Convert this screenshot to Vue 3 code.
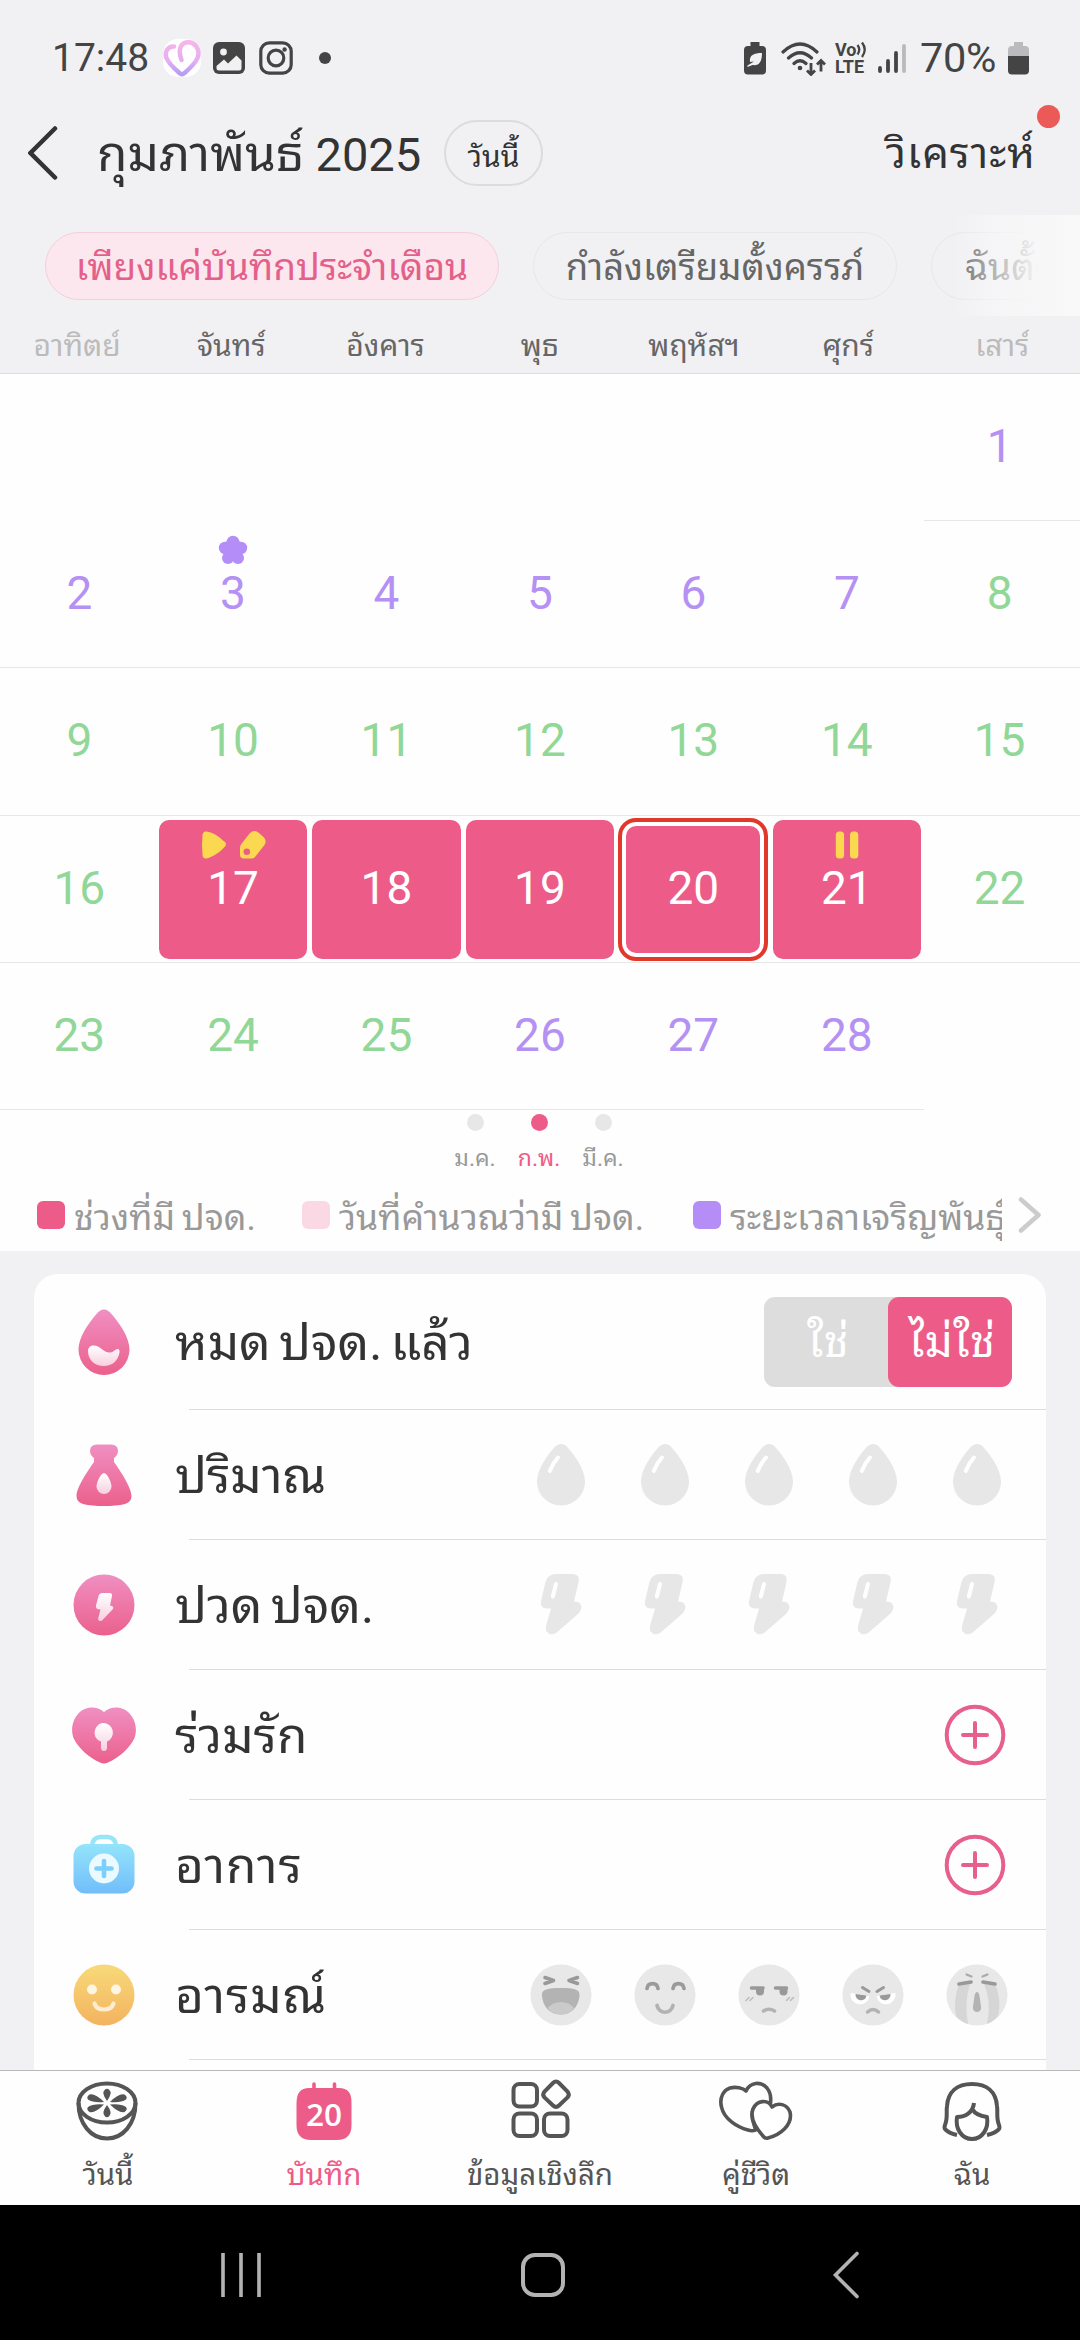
<script setup>
const weekdays = [
  { name: 'อาทิตย์', dim: true }, { name: 'จันทร์' }, { name: 'อังคาร' }, { name: 'พุธ' },
  { name: 'พฤหัสฯ' }, { name: 'ศุกร์' }, { name: 'เสาร์', dim: true },
]

const blanks = Array.from({ length: 6 }, () => ({ type: 'blank' }))
const days = Array.from({ length: 28 }, (_, i) => {
  const n = i + 1
  let type = 'safe'
  if (n <= 7 || n >= 26) type = 'fertile'
  if (n >= 17 && n <= 21) type = 'period'
  return { n, type, selected: n === 20 }
})
const cells = [...blanks, ...days, { type: 'blank' }]

const months = [{ name: 'ม.ค.' }, { name: 'ก.พ.', on: true }, { name: 'มี.ค.' }]
const five = [1, 2, 3, 4, 5]
</script>

<template>
  <div class="screen">
    <svg class="defs" width="0" height="0">
      <defs>
        <linearGradient id="pink" x1="0" y1="0" x2="0" y2="1"><stop offset="0" stop-color="#f08fc2" /><stop offset="1" stop-color="#eb608c" /></linearGradient>
        <linearGradient id="milk" x1="0" y1="0" x2="0" y2="1"><stop offset="0" stop-color="#fff" /><stop offset="1" stop-color="#f7cfdf" /></linearGradient>
        <linearGradient id="sky" x1="0" y1="0" x2="0" y2="1"><stop offset="0" stop-color="#94e4fb" /><stop offset="1" stop-color="#71bdfa" /></linearGradient>
        <linearGradient id="sun" x1="0" y1="0" x2="0" y2="1"><stop offset="0" stop-color="#f8da79" /><stop offset="1" stop-color="#f3b35f" /></linearGradient>
        <linearGradient id="love" x1="0" y1="0" x2="0" y2="1"><stop offset="0" stop-color="#f7b5e8" /><stop offset=".6" stop-color="#e3aef3" /><stop offset="1" stop-color="#b49cf3" /></linearGradient>
      </defs>
    </svg>

    <header class="top">
      <div class="status">
        <span class="clock">17:48</span>
        <svg class="s-love" width="38" height="40" viewBox="0 0 38 40"><rect x="0" y="1" width="38" height="38" rx="15" fill="#fff" /><path d="M11 8.500C4 8 1.500 15 3.500 20C6 26 13 32 16.500 35Q19 37.500 21.500 35C26 31 32 26 34.500 20C38 11 31 2.500 23 4.500C17 6 15 13 18.500 22" fill="none" stroke="url(#love)" stroke-width="4.500" stroke-linecap="round" /></svg>
        <svg class="s-img" width="32" height="32" viewBox="0 0 32 32"><rect width="32" height="32" rx="6" fill="#444" /><circle cx="10.500" cy="10" r="3.400" fill="#f1f1f4" /><path d="M3.500 24L11 17.500L15 21.500L23.500 13.500L28.500 18.500V26Q28.500 28.500 26 28.500H6Q3.500 28.500 3.500 26Z" fill="#f1f1f4" /></svg>
        <svg class="s-ig" width="34" height="34" viewBox="0 0 34 34" fill="none" stroke="#444"><rect x="1.800" y="1.800" width="30.400" height="30.400" rx="8.500" stroke-width="3.200" /><circle cx="17" cy="17" r="7.800" stroke-width="3.200" /><circle cx="25.600" cy="8.500" r="2.200" fill="#444" stroke="none" /></svg>
        <span class="s-dot"></span>
        <span class="grow"></span>
        <svg class="s-eco" width="22" height="33" viewBox="0 0 22 33"><path d="M6.500 0H15.500V4H18Q22 4 22 8V28.500Q22 32.500 18 32.500H4Q0 32.500 0 28.500V8Q0 4 4 4H6.500Z" fill="#444" /><path d="M18 11C18 20 15 24 8.500 23L3.500 25V23.500L10 19.500L6 20C5 13 10 11 18 11Z" fill="#f1f1f4" /></svg>
        <svg class="s-wifi" width="46" height="35" viewBox="0 0 46 35" fill="none" stroke="#444" stroke-width="3.200" stroke-linecap="round"><path d="M2 11Q19 -5 36 11M7.500 17Q19 6.500 30.500 17M13 22.500Q19 17 25 22.500" /><circle cx="19" cy="27" r="2.300" fill="#444" stroke="none" /><path d="M30 22V33M26 29.500L30 33.500L34 29.500M40 30.500V20M36 23.500L40 19.500L44 23.500" stroke-width="2.800" stroke-linecap="butt" /></svg>
        <span class="volte"><b>Vo</b><b>LTE</b><svg width="11" height="17" viewBox="0 0 11 17" fill="none" stroke="#444" stroke-width="2.300"><path d="M1.500 4Q5 8.500 1.500 13.500M6 1.500Q11.500 8.500 6 16" /></svg></span>
        <svg class="s-sig" width="28" height="31" viewBox="0 0 28 31" stroke="#444" stroke-width="3.800" stroke-linecap="round"><path d="M2 25V28M10 18V28M18 10V28" /><path d="M26 3V28" stroke="#b9b9bb" /></svg>
        <span class="pct">70%</span>
        <svg class="s-bat" width="21" height="33" viewBox="0 0 21 33"><path d="M6 0H15V4H17Q21 4 21 8V14H0V8Q0 4 4 4H6Z" fill="#bbbbbd" /><path d="M0 14H21V28.500Q21 32.500 17 32.500H4Q0 32.500 0 28.500Z" fill="#444" /></svg>
      </div>

      <div class="bar">
        <svg class="back" width="30" height="54" viewBox="0 0 30 54"><path d="M27 2.500L2.500 27L27 51.500" fill="none" stroke="#333" stroke-width="4.500" stroke-linecap="round" /></svg>
        <h1><span class="mon">กุมภาพันธ์</span> 2025</h1>
        <button class="today">วันนี้</button>
        <span class="grow"></span>
        <span class="analyze">วิเคราะห์<i class="badge"></i></span>
      </div>

      <div class="chips">
        <button class="chip on">เพียงแค่บันทึกประจำเดือน</button>
        <button class="chip prep">กำลังเตรียมตั้งครรภ์</button>
        <button class="chip preg">ฉันตั้งครรภ์</button>
        <span class="fade"></span>
      </div>

      <div class="week"><span v-for="d in weekdays" :key="d.name" :class="{ dim: d.dim }">{{ d.name }}</span></div>
    </header>

    <section class="calendar">
      <div class="grid">
        <div v-for="(c, i) in cells" :key="i" class="cell" :class="[c.type, { selected: c.selected }]">
          <div v-if="c.n" class="tile">
            <span class="num">{{ c.n }}</span>
            <svg v-if="c.n === 3" class="mark" width="30" height="30" viewBox="0 0 30 30" fill="#b48df7"><path d="M15 4L24.500 11L21 24H9L5.500 11Z" stroke="#b48df7" stroke-width="4" stroke-linejoin="round" /><circle cx="15" cy="7" r="6.300" /><circle cx="23" cy="13" r="6.200" /><circle cx="7" cy="13" r="6.200" /><circle cx="10" cy="23" r="6" /><circle cx="20" cy="23" r="6" /></svg>
            <svg v-if="c.n === 17" class="mark" width="66" height="30" viewBox="0 0 66 30"><path d="M6.500 1.500C13 2 19 7 25 12Q27 14 25 16.500C20 22 14 26.500 6.500 28.500Q3 29 2.500 25Q1.500 15 2.500 5Q3 1 6.500 1.500Z" fill="#fad850" /><path d="M50 3Q54.500 -1 59 3L64 7.500Q67 11 64.500 15L55 27Q53.500 28.500 51.500 28.500H44Q40 28.500 40 24.500V18Q40 16 41 14.500ZM46.800 18.500A3.300 3.300 0 1 0 46.800 25.100A3.300 3.300 0 1 0 46.800 18.500Z" fill="#fad850" fill-rule="evenodd" /></svg>
            <svg v-if="c.n === 21" class="mark" width="30" height="30" viewBox="0 0 30 30" fill="#fad850"><rect x="3.800" y="1.500" width="8.300" height="27" rx="3.500" /><rect x="18" y="1.500" width="8.300" height="27" rx="3.500" /></svg>
          </div>
        </div>
      </div>

      <div class="months">
        <div v-for="m in months" :key="m.name" class="month" :class="{ on: m.on }"><i></i><span>{{ m.name }}</span></div>
      </div>

      <div class="legend">
        <div class="leg-list">
          <span class="leg a"><i></i><em>ช่วงที่มี ปจด.</em></span>
          <span class="leg b"><i></i><em>วันที่คำนวณว่ามี ปจด.</em></span>
          <span class="leg c"><i></i><em>ระยะเวลาเจริญพันธุ์</em></span>
        </div>
        <svg width="24" height="38" viewBox="0 0 24 38"><path d="M3 3.500L20.500 19L3 34.500" fill="none" stroke="#ccc" stroke-width="4.500" stroke-linecap="round" stroke-linejoin="round" /></svg>
      </div>
    </section>

    <main class="sheet">
      <div class="card">
        <div class="row first">
          <svg class="ico" viewBox="0 0 66 66"><path d="M33 .5C36 .5 38 2 40.500 5C48 13.500 58.500 28 58.500 40.500A25.500 25.500 0 0 1 7.500 40.500C7.500 28 18 13.500 25.500 5C28 2 30 .5 33 .5Z" fill="url(#pink)" /><path d="M17 42C17 37 22 35 27 37.500C33 41 36 46 43 42C47 38.500 49 40 48.500 43.500C47 52 41 57 33 57C24 57 17 51 17 42Z" fill="url(#milk)" /></svg>
          <div class="body"><span class="label">หมด ปจด. แล้ว</span><div class="toggle"><span class="yes">ใช่</span><span class="no">ไม่ใช่</span></div></div>
        </div>
        <div class="row">
          <svg class="ico" viewBox="0 0 66 66"><path d="M26 2.500H40Q47 2.500 47 9Q47 13 43 16V20C48 27 60.500 45 60.500 54Q60.500 60 54 62Q45 64 33 64Q21 64 12 62Q5.500 60 5.500 54C5.500 45 18 27 23 20V16Q19 13 19 9Q19 2.500 26 2.500Z" fill="url(#pink)" /><path d="M33 31C36 31 40.500 40 40.500 44.500A7.500 7.500 0 0 1 25.500 44.500C25.500 40 30 31 33 31Z" fill="url(#milk)" /></svg>
          <div class="body"><span class="label">ปริมาณ</span>
            <div class="picks"><svg v-for="n in five" :key="n" viewBox="0 0 66 66"><path d="M33 2C35.500 2 37.500 3 40 6C47 13.500 57 28 57 39.500A24 24 0 0 1 9 39.500C9 28 19 13.500 26 6C28.500 3 30.500 2 33 2Z" fill="#e7e7e7" /><path d="M30 15.500Q25 21 21.800 29" fill="none" stroke="#fff" stroke-width="4" stroke-linecap="round" /></svg></div>
          </div>
        </div>
        <div class="row">
          <svg class="ico" viewBox="0 0 66 66"><circle cx="33" cy="33" r="30.500" fill="url(#pink)" /><path d="M31.500 21H38.500Q41.500 21 41 24L39 33.500Q43.500 34 42 37L31 48.500Q27.500 50 27 47L29.500 37.500Q24 37.500 25 33.500L27.500 24Q28.500 21 31.500 21Z" fill="url(#milk)" /></svg>
          <div class="body"><span class="label">ปวด ปจด.</span>
            <div class="picks"><svg v-for="n in five" :key="n" viewBox="0 0 66 66"><path d="M28 2H44Q52 2 50.500 10L46 29.500Q53 29 53.500 35.500Q53 39 50 42L28 61Q22.500 64 18.500 59.500Q17.500 57 18 54L23 36.500H18Q12 35.500 13 29L17.500 10Q20 2 28 2Z" fill="#e7e7e7" /><path d="M28 12L24.800 24.500" stroke="#fff" stroke-width="4" stroke-linecap="round" /></svg></div>
          </div>
        </div>
        <div class="row">
          <svg class="ico" viewBox="0 0 66 66"><path d="M33 10C41 3 53 4.500 59 12C64.500 18 66.500 28 63.500 36C59 46 48 55.500 37 60.500Q33 62.500 29 60.500C18 55.500 7 46 2.500 36C-.5 28 1.500 18 7 12C13 4.500 25 3 33 10Z" fill="url(#pink)" /><path d="M23.500 30.800A9.200 9.600 0 1 1 36 39.600V46.500Q35.500 49 33 49Q30.500 49 30 46.500V39.600A9.300 9.600 0 0 1 23.500 30.800Z" fill="url(#milk)" /></svg>
          <div class="body"><span class="label">ร่วมรัก</span><svg class="add" viewBox="0 0 62 62"><circle cx="31" cy="31" r="28.300" /><path d="M31 19V43M19 31H43" /></svg></div>
        </div>
        <div class="row">
          <svg class="ico" viewBox="0 0 66 66"><path d="M21 13.500Q22 5.500 29 5H37Q44 5.500 45 13.500" fill="none" stroke="#96e5f9" stroke-width="4.500" /><rect x="2.500" y="12" width="61" height="49.500" rx="12" fill="url(#sky)" /><circle cx="33" cy="36.500" r="15" fill="#eafaff" /><path d="M33 29V44M25.500 36.500H40.500" stroke="#7bcffa" stroke-width="4.600" stroke-linecap="round" /></svg>
          <div class="body"><span class="label wide">อาการ</span><svg class="add" viewBox="0 0 62 62"><circle cx="31" cy="31" r="28.300" /><path d="M31 19V43M19 31H43" /></svg></div>
        </div>
        <div class="row">
          <svg class="ico" viewBox="0 0 66 66"><circle cx="33" cy="33" r="30.500" fill="url(#sun)" /><circle cx="21" cy="27.500" r="5" fill="#fef5e2" /><circle cx="45" cy="27.500" r="5" fill="#fef5e2" /><path d="M23.500 41.500C26 49.500 40 49.500 42.500 41.500" fill="none" stroke="#fdecd0" stroke-width="4.200" stroke-linecap="round" /></svg>
          <div class="body"><span class="label wide">อารมณ์</span>
            <div class="picks moods">
              <svg viewBox="0 0 66 66"><circle cx="33" cy="33" r="30.500" fill="#e8e8e8" /><path d="M17 15.500L25.500 18.500L17 21.500M49.500 15.500L41 18.500L49.500 21.500" fill="none" stroke="#999" stroke-width="3.600" stroke-linecap="round" stroke-linejoin="round" /><path d="M14 34C13 27 20 26 33 26C46 26 52.500 27 51.500 34C50.500 45 43 52.500 33 52.500C22 52.500 15 45 14 34Z" fill="#b3b3b3" /><path d="M19.500 46Q25 40 33 40Q41 40 46 46Q41 52.500 33 52.500Q24 52.500 19.500 46Z" fill="#cacaca" /></svg>
              <svg viewBox="0 0 66 66" fill="none" stroke-width="3.700" stroke-linecap="round"><circle cx="33" cy="33" r="30.500" fill="#e8e8e8" /><path d="M15 26.500C16 20 25 20 26 26.500M41 26.500C42 20 51 20 52 26.500" stroke="#9a9a9a" /><path d="M25 43.500C27 52.500 39 52.500 41 43.500" stroke="#b2b2b2" /></svg>
              <svg viewBox="0 0 66 66" fill="none" stroke-linecap="round"><circle cx="33" cy="33" r="30.500" fill="#e8e8e8" /><path d="M15.500 26H27M39.500 26H50.500" stroke="#999" stroke-width="3.600" /><path d="M20 26H28V29.500A4 4 0 0 1 20 29.500ZM43.500 26H51.500V29.500A4 4 0 0 1 43.500 29.500Z" fill="#999" /><path d="M10 38.500L13 35.500M14 38.500L17 35.500M50.500 38.500L53.500 35.500M54.500 38.500L57.500 35.500" stroke="#bbb" stroke-width="1.500" /><path d="M27.500 49Q33 45.500 38.500 49" stroke="#b3b3b3" stroke-width="3.500" /></svg>
              <svg viewBox="0 0 66 66" fill="none" stroke-linecap="round"><circle cx="33" cy="33" r="30.500" fill="#e8e8e8" /><path d="M10.500 31L29.500 34A9.500 9.700 0 1 1 10.500 31ZM55.500 31L36.500 34A9.500 9.700 0 1 0 55.500 31Z" fill="#fff" /><path d="M15.500 32L26.500 33.500A5.500 5.500 0 0 1 15.500 32ZM50.500 32L39.500 33.500A5.500 5.500 0 0 0 50.500 32Z" fill="#999" /><path d="M22.500 25.500L29 29.500M43.500 25.500L37 29.500" stroke="#999" stroke-width="3" /><path d="M27.500 50Q33 45 38.500 50" stroke="#b3b3b3" stroke-width="3.500" /></svg>
              <svg viewBox="0 0 66 66" fill="none" stroke-linecap="round"><circle cx="33" cy="33" r="30.500" fill="#e8e8e8" /><path d="M15 22H26Q20 40 24 62Q17 60 12 54Q9 38 15 22ZM51 22H40Q48 40 43 62Q49 60 54 54Q58 38 51 22Z" fill="#d6d6d6" /><path d="M15 22L27 20M51 22L39 20" stroke="#999" stroke-width="3.700" /><path d="M22.500 12.500L27.500 14.500M43.500 12.500L38.500 14.500" stroke="#aaa" stroke-width="2.200" /><path d="M33 30Q34.800 30 35.500 34L37.200 46A4.300 5 0 0 1 28.800 46L30.500 34Q31.200 30 33 30Z" fill="#b3b3b3" /></svg>
            </div>
          </div>
        </div>
      </div>
    </main>

    <nav class="tabs">
      <div class="tab">
        <svg width="74" height="64" viewBox="0 0 74 64" fill="none" stroke="#555" stroke-width="4"><ellipse cx="36" cy="24" rx="28.500" ry="19.500" /><path d="M7.500 24C7.500 45 20 59.500 36 59.500S64.500 45 64.500 24" /><g fill="#555" stroke="none"><path d="M36 22Q30 14 34 10.500Q36 9 38 10.500Q42 14 36 22ZM36 26Q30 34 34 37.500Q36 39 38 37.500Q42 34 36 26Z" /><path d="M33 23Q22 24 17 20.500Q15 18 18.500 15.500Q24 14 33 23ZM39 23Q50 24 55 20.500Q57 18 53.500 15.500Q48 14 39 23ZM33 25.500Q22 24.500 17 28Q15 30.500 18.500 33Q24 34.500 33 25.500ZM39 25.500Q50 24.500 55 28Q57 30.500 53.500 33Q48 34.500 39 25.500Z" /></g></svg>
        <span>วันนี้</span>
      </div>
      <div class="tab on">
        <svg width="74" height="64" viewBox="0 0 74 64"><path d="M27 5V12M47.500 5V12" stroke="#ed5c88" stroke-width="3.600" stroke-linecap="round" /><path d="M22 9H52Q65 9 64.500 24V46Q64.500 61 50 61H24Q9.500 61 9.500 46V24Q9.500 9 22 9Z" fill="#ed5c88" /><text x="37" y="47" text-anchor="middle" fill="#fff" font-size="31.500" font-weight="600" font-family="Open Sans, sans-serif">20</text></svg>
        <span>บันทึก</span>
      </div>
      <div class="tab">
        <svg width="74" height="64" viewBox="0 0 74 64" fill="none" stroke="#555" stroke-width="4"><rect x="10.500" y="5" width="23.500" height="22.500" rx="6" /><rect x="10.500" y="34.500" width="23.500" height="22.500" rx="6" /><rect x="41" y="34.500" width="23.500" height="22.500" rx="6" /><path d="M50 4Q53 1 56 4L64.500 12.500Q67 15.500 64.500 18.500L56 26.500Q53 29.500 50 26.500L41.500 18.500Q39 15.500 41.500 12.500Z" /></svg>
        <span>ข้อมูลเชิงลึก</span>
      </div>
      <div class="tab">
        <svg width="78" height="64" viewBox="0 0 78 64" fill="none" stroke="#555" stroke-width="3.600" stroke-linejoin="round"><path d="M29 12C33 3 44 2 50 9C54 14 54.500 20 53 27C46 21 35 26 35 36C35 42 38 47 38.500 51C36 52 34 52 31 51C20 48 7 40 4.500 28C2 18 7 11 13 9C19 7.500 26 9 29 12Z" /><path d="M55 28C61 23 70 25 73 33C76 46 63 56 51 59Q48 60 46 57C38 48 33 38 36 30C40 21 51 20 55 28Z" fill="#fff" /></svg>
        <span>คู่ชีวิต</span>
      </div>
      <div class="tab">
        <svg width="74" height="64" viewBox="0 0 74 64" fill="none" stroke="#555" stroke-width="4" stroke-linejoin="round"><path d="M22 56Q13 54 10 50Q9 49 10 46C13 39 11 33 12 27C13 13 22 5 37 5S61 13 62 27C63 33 61 39 64 46Q65 49 64 50Q61 54 52 56" /><path d="M39 24C38 33 31 38 22 38C20 50 27 60 37 60S54 50 52 38C46 37 40 35 38 31" /></svg>
        <span>ฉัน</span>
      </div>
    </nav>

    <footer class="sysnav">
      <svg width="44" height="46" viewBox="0 0 44 46" stroke="#b3b3b3" stroke-width="3.600"><path d="M4 1V45M22 1V45M40 1V45" /></svg>
      <svg class="home" width="46" height="46" viewBox="0 0 46 46"><rect x="3" y="3" width="40" height="40" rx="12" fill="none" stroke="#b3b3b3" stroke-width="4" /></svg>
      <svg width="30" height="48" viewBox="0 0 30 48"><path d="M26 2.500L4.500 24L26 45.500" fill="none" stroke="#b3b3b3" stroke-width="3.600" stroke-linecap="round" /></svg>
    </footer>
  </div>
</template>

<style>
body { margin: 0; background: #f1f1f4; }
</style>

<style scoped>
* { box-sizing: border-box; }
.screen { width: 1080px; height: 2340px; overflow: hidden; display: flex; flex-direction: column; background: #f1f1f4; font-family: Roboto, "Noto Sans Thai Looped", "Noto Looped Thai", "Noto Sans Thai", "Noto Sans", sans-serif; color: #333; white-space: nowrap; }
.defs { position: absolute; }
button { font: inherit; background: none; padding: 0; display: flex; align-items: center; justify-content: center; flex: none; }
svg { flex: none; display: block; }
.grow { flex: 1; }
.top { height: 374px; flex: none; border-bottom: 1px solid #ddd; }

.status { height: 116px; padding: 0 51px 0 52px; display: flex; align-items: center; color: #444; }
.clock, .pct { font-size: 39px; line-height: 46px; }
.clock { width: 98px; }
.s-love { margin-left: 13px; }
.s-img { margin-left: 12px; }
.s-ig { margin-left: 14px; }
.s-dot { width: 12px; height: 12px; border-radius: 50%; background: #444; margin-left: 26px; }
.s-wifi { margin-left: 15px; }
.volte { position: relative; width: 32px; margin-left: 8px; display: flex; flex-direction: column; font-size: 18px; line-height: 17px; }
.volte b { font-weight: 700; }
.volte svg { position: absolute; right: 0; top: 0; }
.s-sig { margin-left: 11px; }
.status .pct { width: 82px; margin: 0 6px 0 14px; font-size: 41.500px; letter-spacing: -.3px; }

.bar { height: 74px; display: flex; align-items: center; padding: 0 46px 0 28px; }
h1 { margin: 3px 0 0 39px; width: 323px; font-size: 47px; line-height: 70px; font-weight: 400; }
.mon { font-size: 49.500px; }
.today { width: 99px; height: 66px; margin-left: 24px; border: 2px solid #dcdcde; border-radius: 33px; font-size: 30px; color: #333; }
.analyze { position: relative; font-size: 42px; letter-spacing: 1px; line-height: 60px; margin: 2px -2px 0 0; }
.badge { position: absolute; width: 23px; height: 23px; border-radius: 50%; background: #eb5a56; right: -24px; top: -19px; }

.chips { position: relative; height: 126px; padding: 42px 0 0 45px; display: flex; gap: 34px; overflow: hidden; font-size: 37px; }
.chip { height: 68px; border: 1px solid #e7e7ea; border-radius: 34px; color: #666; padding-bottom: 5px; }
.chip.on { width: 454px; background: #fce7ee; border-color: #f5cfdb; color: #e4608a; }
.prep { width: 364px; font-size: 36.500px; }
.preg { width: 268px; justify-content: flex-start; padding-left: 33px; }
.fade { position: absolute; right: 0; top: 25px; width: 136px; height: 101px; background: linear-gradient(90deg, rgba(249,249,250,0) 5%, rgba(249,249,250,.55) 38%, #f7f7f8 70%, #f9f9f9); }

.week { height: 57px; display: grid; grid-template-columns: repeat(7, 154.2px); padding-top: 8px; font-size: 30px; line-height: 44px; text-align: center; color: #666; }
.week .dim { color: #bbb; }

.calendar { height: 877px; flex: none; background: #fefefe; }
.grid { display: grid; grid-template-columns: 156.300px repeat(5, 153.460px) 156.400px; grid-auto-rows: 147.200px; }
.cell { border-bottom: 1.500px solid #e7e7e7; padding: 4px 2.700px 3px; }
.cell:nth-child(7n+1) { padding-left: 5px; }
.cell:nth-child(7n) { padding-right: 7px; }
.cell.blank { border-bottom-color: transparent; }
.tile { position: relative; height: 139px; display: flex; align-items: center; justify-content: center; border-radius: 10px; font-size: 46px; }
.num { margin-top: -3px; }
.fertile { color: #b491f3; }
.safe { color: #91d797; }
.period { color: #fff; }
.period .tile { background: #ed5c88; }
.selected .tile { height: 143px; margin: -2px -1px; border: 4.500px solid #e0382b; border-radius: 18px; background-clip: padding-box; box-shadow: inset 0 0 0 4px #fff; }
.mark { position: absolute; top: 10px; left: 50%; transform: translateX(-50%); }

.months { height: 72px; padding-left: 443px; display: flex; }
.month { width: 64px; display: flex; flex-direction: column; align-items: center; padding-top: 4px; font-size: 23px; color: #999; }
.month i { width: 17px; height: 17px; border-radius: 50%; background: #e7e7e7; }
.month span { line-height: 34px; margin-top: 11px; }
.month.on { color: #ed5c88; }
.month.on i { background: #ed5c88; }

.legend { display: flex; align-items: center; padding-left: 37px; height: 66px; }
.leg-list { display: flex; width: 965px; height: 66px; overflow: hidden; font-size: 35.500px; word-spacing: -2px; color: #999; margin-right: 16px; }
.leg { display: flex; align-items: center; flex: none; }
.leg i { width: 28px; height: 28px; border-radius: 6px; margin-right: 9px; }
.leg em { font-style: normal; margin-top: -2px; }
.a { width: 265px; } .a i { background: #ed5c88; }
.b { width: 391px; } .b i { background: #fad9e4; }
.c i { background: #b48df7; }

.sheet { height: 819px; flex: none; overflow: hidden; padding: 23px 34px 0; }
.card { background: #fefefe; border-radius: 24px 24px 0 0; height: 800px; }
.row { height: 130px; display: flex; align-items: center; padding-left: 37px; }
.row.first { height: 136px; }
.ico { width: 66px; height: 66px; }
.body { height: 100%; flex: 1; margin-left: 52px; padding-right: 36px; border-style: solid; border-color: #ddd; border-width: 0 0 1px; display: flex; align-items: center; justify-content: space-between; }
.label { font-size: 49.500px; word-spacing: -4px; line-height: 80px; margin: 3px 0 0 -14px; }
.wide { letter-spacing: .9px; }
.toggle { width: 248px; height: 90px; border-radius: 11px; background: #ddd; color: #fff; display: grid; grid-template-columns: 1fr 1fr; text-align: center; line-height: 90px; font-size: 44px; letter-spacing: .6px; margin-right: -2px; }
.toggle span { padding-left: 4px; }
.no { background: #ed5c88; border-radius: 11px; }
.picks { display: flex; gap: 38px; }
.picks svg { width: 66px; height: 66px; }
.add { width: 62px; height: 62px; margin-right: 4px; fill: none; stroke: #e7608b; stroke-width: 4; stroke-linecap: round; }

.tabs { height: 135px; flex: none; background: #fefefe; border-top: 1.500px solid #b8b8b8; display: grid; grid-template-columns: repeat(5, 216px); font-size: 29.500px; color: #555; }
.tab { display: flex; flex-direction: column; align-items: center; padding-top: 8px; }
.tab span { line-height: 40px; margin-top: 12px; }
.tab.on { color: #ed5c88; }

.sysnav { height: 135px; flex: none; background: #000; display: flex; align-items: center; padding: 4px 219px 0; justify-content: space-between; }
.home { margin-right: 8px; }
</style>
